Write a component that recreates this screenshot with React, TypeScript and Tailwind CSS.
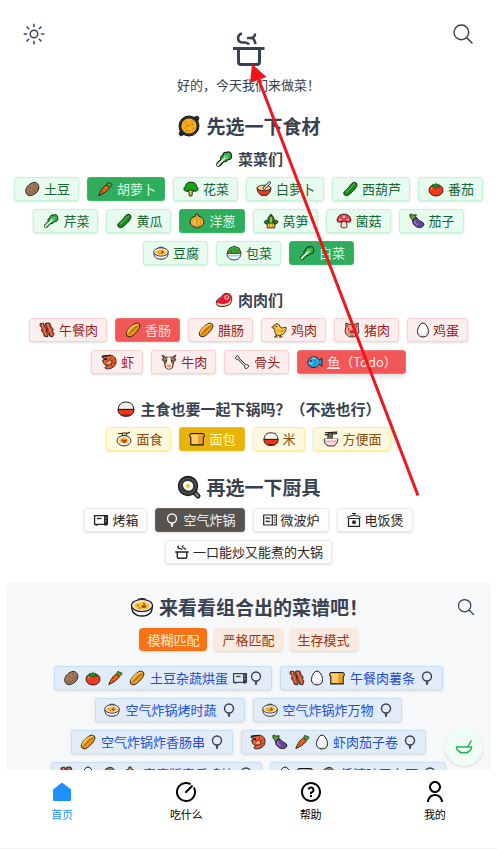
import type { ReactNode } from "react";
import { IoSearchOutline, IoSunnyOutline } from "react-icons/io5";
import { RiQuestionLine, RiUserLine } from "react-icons/ri";

const K = "#161616";

const emojiArt: Record<string, ReactNode> = {
  potato: (
    <>
      <path d="M3 16C2 11 8 3 15 2.5C20 2.500 23 7 21.500 12C20 18 13 22 8 21.500C5 21 3.500 19 3 16Z" fill="#a5795c" stroke={K} strokeWidth="1.3" />
      <path d="M6 18C10 19 17 16 20 10" fill="none" stroke="#8a6147" strokeWidth="1.600" />
      <path d="M9 10h1.500M14 6.500h1.500M13 12h1.500M8 15h1.500M17 9.500h1.500" stroke="#5d3d2a" strokeWidth="1.500" />
    </>
  ),
  carrot: (
    <>
      <path d="M3 21.500C5 16 10 7 14 6.500C17 6.500 19 9 17.500 11.500C14 16 7 20 3 21.500Z" fill="#f7630c" stroke={K} strokeWidth="1.3" />
      <path d="M10 11l2.500 2M7.500 15.500l2 1.300" stroke="#b83d06" strokeWidth="1.300" />
      <path d="M15.500 8C14 5 15 2.500 17 2L18.500 4.500C20 3 22 4 22 6C22 8 19 10 16.500 9Z" fill="#4fa72a" stroke={K} strokeWidth="1" />
    </>
  ),
  broccoli: (
    <>
      <path d="M9 12h6l2 3-3 1-.5 6h-4L9 16l-3-1z" fill="#b5d334" stroke={K} strokeWidth="1.200" />
      <path d="M4 15C1 14 1 9.500 4 8.500C4 4 8 2 12 2C16 2 20 4 20 8.500C23 9.500 23 14 20 15C17 16 14 13 12 13.500C9 13 7 16 4 15Z" fill="#16a316" stroke={K} strokeWidth="1.200" />
    </>
  ),
  spoonBowl: (
    <>
      <path d="M2 10C2 17 6 21.500 12 21.500S22 17 22 10Z" fill="#e83d20" stroke={K} strokeWidth="1.300" />
      <ellipse cx="12" cy="10.500" rx="9.800" ry="4" fill="#fbd394" stroke={K} strokeWidth="1.200" />
      <path d="M12 11L20 3" stroke={K} strokeWidth="4" strokeLinecap="round" />
      <path d="M12 11L20 3" stroke="#eee" strokeWidth="2" strokeLinecap="round" />
      <path d="M8 21h8" stroke="#9a2411" strokeWidth="2" />
    </>
  ),
  cucumber: (
    <>
      <path d="M4 20.500C1.500 18 4 14.500 7 13C11 10 13 4 17 2.500C20 1.500 23 4 22 7C21 11 15 17 10 20.500C8 22 5.500 22 4 20.500Z" fill="#168a1b" stroke={K} strokeWidth="1.300" />
      <path d="M6 17C11 14 15 7 19 4.500" fill="none" stroke="#4cc34a" strokeWidth="1.500" />
    </>
  ),
  tomato: (
    <>
      <path d="M2 14C2 8 6 6 12 6.500C18 6 22 8 22 14C22 19 17 22 12 22S2 19 2 14Z" fill="#ef3a1d" stroke={K} strokeWidth="1.300" />
      <path d="M12 3v3l4-1-1 3 3 2-5-1-1 3-2-3-5 1 3-2-1-3 4 1z" fill="#179b22" stroke="#0d4e12" strokeWidth=".800" />
      <path d="M5 13C5 11 6 10 7 10" fill="none" stroke="#ff9278" strokeWidth="1.500" />
    </>
  ),
  leafy: (
    <>
      <path d="M3 21C1.500 18.500 4 15.500 8 13C7 10 8 8 10.500 7.500C10.500 4 13 2.500 15.500 3.500C18 1.500 22 3.500 21.500 7C23 10 20.500 13.500 17 13C15.500 15.500 12.500 16 11 16C8.500 19.500 5 23 3 21Z" fill="#2fae41" stroke={K} strokeWidth="1.400" />
      <path d="M4 20C6 17 10 14 13 11" fill="none" stroke="#d8f6d3" strokeWidth="2.600" strokeLinecap="round" />
      <path d="M13 11L18 6.500M13 11V7M13 11h4" stroke="#a6e59d" strokeWidth="1.200" />
    </>
  ),
  onion: (
    <>
      <path d="M10.500 2h3l.5 3C20 6.500 22 10 22 13.500C22 18 18 20.500 14 21l-2 1.500L10 21C6 20.500 2 18 2 13.500C2 10 4 6.500 10 5Z" fill="#f6ae2d" stroke={K} strokeWidth="1.300" />
      <path d="M10 6C5 11 6 17 9.500 20M14 6C19 11 18 17 14.500 20M12 6v14" fill="none" stroke="#c07d1a" strokeWidth="1" />
      <path d="M8.500 10C7 13 8 16 9 18" fill="none" stroke="#ffe3a0" strokeWidth="1.300" />
    </>
  ),
  bamboo: (
    <>
      <path d="M2 14C3 10 6 11 7 12L8 7L12 2L16 7L17 12C19 10 22 11 22 14L18 17H6Z" fill="#23851f" stroke={K} strokeWidth="1.200" />
      <path d="M9.500 8L12 4l2.500 4v8h-5z" fill="#91cf37" stroke={K} strokeWidth=".800" />
      <path d="M6.500 15h11v7h-11z" fill="#f8c52d" stroke={K} strokeWidth="1.200" />
      <path d="M10 15v7M14 15v7" stroke="#9c7310" />
    </>
  ),
  mushroom: (
    <>
      <path d="M8.500 12h7l1 8.500C15 22.500 9 22.500 7.500 20.500Z" fill="#fbdcc7" stroke={K} strokeWidth="1.200" />
      <path d="M2 12C2 6 6 2 12 2S22 6 22 12C20 15.500 15 12.500 12 13C9 12.500 4 15.500 2 12Z" fill="#ee3b4b" stroke={K} strokeWidth="1.200" />
      <circle cx="12" cy="6" r="2" fill="#fbb" />
      <circle cx="6.500" cy="10" r="1.600" fill="#fbb" />
      <circle cx="17.500" cy="10" r="1.600" fill="#fbb" />
    </>
  ),
  eggplant: (
    <>
      <path d="M7 8C10 5 13 8 15 11C17 13 22 13 22 17.500C21 22 14 23 10 19.500C6 17 4 12 7 8Z" fill="#68449c" stroke={K} strokeWidth="1.200" />
      <path d="M8.500 11C8.500 14 11 17 13 18" fill="none" stroke="#a889cf" strokeWidth="1.500" />
      <path d="M1.500 3L4 2l2 1.500L11 3L10 6L11 8L8 8.500L6 12L4 8.500C2 8 2 5 1.500 3Z" fill="#659d2b" stroke={K} strokeWidth="1.200" />
    </>
  ),
  stew: (
    <>
      <path d="M2 11C1 17 5 21 12 21S23 17 22 11Z" fill="#f4f4f4" stroke={K} strokeWidth="1.300" />
      <path d="M8 5C8 3 16 3 16 5" fill="#ddd" stroke={K} strokeWidth="1.100" />
      <ellipse cx="12" cy="10.500" rx="10.500" ry="6" fill="#f4f4f4" stroke={K} strokeWidth="1.200" />
      <ellipse cx="12" cy="10.800" rx="8" ry="4" fill="#f9c13c" />
      <path d="M12 11c2-2 4-1 4 1l-4 .5z" fill="#9d541c" stroke="#9d541c" />
      <path d="M7 10.500h2M9 13h1.500M13 8.500h2" stroke="#d8591c" strokeWidth="1.400" />
    </>
  ),
  salad: (
    <>
      <path d="M3 13C1 9 5 8 5 6C6 3 9 5 10 3C12 1 15 3 16 4C20 3 20 8 21 9C23 11 21 13 20 14Z" fill="#37b637" stroke={K} strokeWidth="1.200" />
      <path d="M6 8l3 3M12 5l1 4M17 7l-1 4" stroke="#117522" strokeWidth="1.500" />
      <path d="M8 7h2M14 10h2M6 11h2M17 8h1.500" stroke="#ee3d24" strokeWidth="2" />
      <path d="M2 12.500h20C22 18 19 22 12 22S2 18 2 12.500Z" fill="#eefafa" stroke={K} strokeWidth="1.200" />
      <path d="M3 16h18" stroke="#76c9d0" strokeWidth="1.500" />
    </>
  ),
  steak: (
    <>
      <path d="M2 15C2 11 7 10 9 7C11 3 18 2 21 6C23 9 22 16 19 18C15 21 7 21 4 19.500C2.500 18.500 2 17 2 15Z" fill="#f3c9a8" stroke={K} strokeWidth="1.200" />
      <path d="M3 13C5 10 8 10 10 7C12 3 18 3 20.500 6.500C22 10 20 14 17 15.500C12 18 6 17 4 16C3 15.500 2.500 14 3 13Z" fill="#e5172d" />
      <circle cx="15.500" cy="8.500" r="2.500" fill="#ee2a3c" stroke="#ffd6cf" strokeWidth="1.300" />
    </>
  ),
  bacon: (
    <>
      <path d="M2 3l5-1 2 5 3 3-1 4 3 3-1 5-5-1-1-4-3-4 1-4-3-3zM10 2l6 0 2 5 3 4-1 3 2 3-2 5-4-1-1-5-3-3 0-4-2-3z" fill="#c94a2b" stroke={K} strokeWidth="1.200" />
      <path d="M5 3l1 5 3 4-1 3 3 5M13 3l1 5 3 4 0 3 2 5" fill="none" stroke="#f58e62" strokeWidth="1.300" />
    </>
  ),
  sausage: (
    <>
      <path d="M3.500 20.500C0 17 5 11 8 8C12 4 18 0 21 3.500C24 7 19 13 16 16C12 20 7 24 3.500 20.500Z" fill="#e89b16" stroke={K} strokeWidth="1.400" />
      <path d="M4 17C5 11 14 3 19 4" fill="none" stroke="#ffc954" strokeWidth="2.200" />
      <path d="M6 18C8 14 10 16 11 13C12 10 14 12 15 9C16 7 18 8 19 6" fill="none" stroke="#99590a" strokeWidth="1.500" />
    </>
  ),
  chick: (
    <>
      <path d="M8 18v4M14 18v4M5 22h5M12 22h5" stroke="#7a3f0f" strokeWidth="2" />
      <path d="M1.500 8L5 6C6 2 12 2 13 6C14 10 17 9 22 8C23 12 20 19 13 20C7 20 5 15 6 11Z" fill="#fcc935" stroke={K} strokeWidth="1.200" />
      <path d="M10 12C13 15 17 14 19 12" fill="none" stroke="#ca7d0d" strokeWidth="1.500" />
      <circle cx="8" cy="7" r="1.100" fill={K} />
      <path d="M1.500 8L5 6.500l.5 3z" fill="#ee7419" />
    </>
  ),
  pig: (
    <>
      <path d="M3 2l6 2h6l6-2v6l1 6C21 20 17 22 12 22S3 20 2 14L3 8Z" fill="#f59a8d" stroke={K} strokeWidth="1.200" />
      <path d="M4 4l4 2-3 3zM20 4l-4 2 3 3z" fill="#ba5148" />
      <ellipse cx="12" cy="14.500" rx="4.500" ry="3.300" fill="#e8604f" />
      <path d="M10.500 13.500v2M13.500 13.500v2M7 10v1.500M17 10v1.500" stroke={K} strokeWidth="1.500" />
      <path d="M10 20h4" stroke="#a33b36" strokeWidth="1.200" />
    </>
  ),
  egg: (
    <>
      <path d="M12 2C16 2 20 9 20 14.500C20 19 17 22 12 22S4 19 4 14.500C4 9 8 2 12 2Z" fill="#fafafa" stroke={K} strokeWidth="1.400" />
      <path d="M7 19C11 21 17 19 18 14" fill="none" stroke="#ddd" strokeWidth="1.500" />
    </>
  ),
  shrimp: (
    <>
      <path d="M1.500 5C6 3 15 1 19 4C24 8 23 17 17 20C12 23 6 22 6 20L10 17C5 17 3 13 3 9L7 8Z" fill="#ed6231" stroke={K} strokeWidth="1.300" />
      <path d="M9 12C10 9 15 8 16 11C17 15 13 17 10 16" fill="#f59a70" stroke={K} strokeWidth="1.200" />
      <path d="M15 4l-1 4M20 8l-4 2M21 14l-4-1M17 19l-2-4" stroke="#972b12" strokeWidth="1.300" />
      <circle cx="8" cy="8" r="1.500" fill={K} />
      <path d="M2 3.500L14 2.500" stroke={K} strokeWidth="1.800" />
    </>
  ),
  cow: (
    <>
      <path d="M4 6L2 2l5 3h10l5-3-2 4 2 3-3 2-2 9c-2 3-8 3-10 0L5 11 2 9z" fill="#a9714f" stroke={K} strokeWidth="1.200" />
      <path d="M10 5h4l1 9H9z" fill="#fff" />
      <path d="M7 15C8 12 16 12 17 15L16 20C14 22.500 10 22.500 8 20Z" fill="#ffe7d8" />
      <path d="M9 16h6v3l-3 1-3-1z" fill="#ff8b6d" />
      <path d="M8 9v2M16 9v2" stroke={K} strokeWidth="1.700" />
    </>
  ),
  bone: (
    <path d="M7.500 6.500C8 3 4.500 1.500 4 4.500C1 5 2.500 8.500 6 8L16 18C15.500 22 19 22.500 20 20C23 19 22 15.500 18 16L7.500 6.500Z" fill="#fff" stroke={K} strokeWidth="1.400" />
  ),
  fish: (
    <>
      <path d="M1.500 12.500C2 7 7 4.500 11 4.500C15 4.500 16.500 7 18 9.500L22 6.500V18L18 15C16.500 18 14 20 10 20C5 20 2 17 1.500 12.500Z" fill="#28a9df" stroke={K} strokeWidth="1.300" />
      <path d="M10 8C13 10 13 15 10 18M19 10v4" fill="none" stroke="#0876ad" strokeWidth="1.300" />
      <path d="M3 13c2 0 4 0 5 2M7 7c2-1 4-1 6 0" fill="none" stroke="#a0e7ff" strokeWidth="1.500" />
      <circle cx="6" cy="10.500" r="1.300" fill={K} />
    </>
  ),
  rice: (
    <>
      <path d="M2 13C2 6 6 3 12 3S22 6 22 13Z" fill="#f1f1f1" stroke={K} strokeWidth="1.300" />
      <path d="M1.500 12.500h21C22 18 19 21.500 12 21.500S2 18 1.500 12.500Z" fill="#ec3519" stroke={K} strokeWidth="1.300" />
      <path d="M7 20h10" stroke="#8a1c0b" strokeWidth="1.800" />
    </>
  ),
  pasta: (
    <>
      <path d="M4 4h13l3-2" fill="none" stroke={K} strokeWidth="1.600" />
      <path d="M10 3h6l-1 8H9z" fill="#f6bd3d" stroke={K} strokeWidth="1" />
      <ellipse cx="12" cy="14.500" rx="10" ry="7.500" fill="#f5f5f5" stroke={K} strokeWidth="1.300" />
      <path d="M5 16C5 12 8 9 12 9S19 12 19 16C15 20 9 20 5 16Z" fill="#f9c749" />
      <path d="M8 15c1-4 3-4 4-1 2-3 4-1 4 1l-3 3z" fill="#c9350e" />
    </>
  ),
  bread: (
    <>
      <path d="M4.500 4h15c3.500 0 4 4.500 1.500 6v10.500H3V10C.500 8.500 1 4 4.500 4Z" fill="#e9a21b" stroke={K} strokeWidth="1.500" />
      <path d="M5 5.500h7.500c2.500 0 2.500 3.500 1 4.500v9H4.500v-9C3 9 3 5.500 5 5.500Z" fill="#ffcd6b" />
    </>
  ),
  noodles: (
    <>
      <path d="M3 3l18-1M3 6l18-2" stroke={K} strokeWidth="1.600" />
      <path d="M8 3h6v9H7z" fill="#6f6450" stroke={K} strokeWidth="1" />
      <path d="M2 12h20c0 5-3 8-5 9v1H7v-1c-3-1-5-4-5-9Z" fill="#fbd9dc" stroke={K} strokeWidth="1.300" />
      <path d="M3 12.500h18" stroke="#fff" strokeWidth="2" />
      <path d="M4 16l2-1 2 1 2-1 2 1 2-1 2 1 2-1 2 1" fill="none" stroke="#e57685" />
    </>
  ),
  paella: (
    <>
      <path d="M17 4l3-1.500 1.500 1.500L20.500 7M7 20l-3 1.500L2.500 20 3.500 17" fill="#333" stroke="#222" strokeWidth="1.700" />
      <circle cx="12" cy="12" r="10" fill="#2e2e2e" stroke="#181818" />
      <circle cx="12" cy="12" r="7.600" fill="#f9ae18" />
      <path d="M8 9l2-1M14 7.500h2M12 11h2M7 14h2M15 15l2-1M11 17h2" stroke="#f27a21" strokeWidth="1.600" />
      <path d="M10 11l1 1.500M15 10l1 1M9 17l1-1" stroke="#4a9f28" strokeWidth="1.300" />
    </>
  ),
  pan: (
    <>
      <path d="M16 16l5 5" stroke={K} strokeWidth="5" strokeLinecap="round" />
      <path d="M16 16l5 5" stroke="#7b7b7b" strokeWidth="2.500" strokeLinecap="round" />
      <circle cx="11" cy="11" r="9.500" fill="#4d4d4d" stroke={K} strokeWidth="1.400" />
      <circle cx="11" cy="11" r="7" fill="#333" />
      <path d="M6 10c0-4 5-5 8-3s3 6 0 8-8-1-8-5Z" fill="#fff" />
      <circle cx="11" cy="11" r="2" fill="#f8bd10" />
    </>
  ),
};

const emojiSize = {
  sm: "h-[18px] w-[18px]",
  md: "h-5 w-5",
  lg: "h-[26px] w-[26px]",
};

function Emoji({ name, size = "sm" }: { name: string; size?: keyof typeof emojiSize }) {
  if (name === "egg") {
    return (
      <svg viewBox="2 -1 20 26" className="h-[18px] w-[14px] shrink-0" aria-hidden="true">
        {emojiArt.egg}
      </svg>
    );
  }
  return (
    <svg viewBox="-1 -1 26 26" className={`${emojiSize[size]} shrink-0`} aria-hidden="true">
      {emojiArt[name]}
    </svg>
  );
}

const toolArt: Record<string, ReactNode> = {
  oven: (
    <>
      <path d="M1.600 3.600h12.800v8.800H1.600zM2.500 13.200h2M11.500 13.200h2" strokeWidth="1.300" />
      <path d="M4 6.500h4.500" strokeWidth="1.300" />
      <path d="M11 3.500h3.400v9H11z" fill="currentColor" stroke="none" />
      <path d="M12.300 6h1M12.300 9h1" stroke="#eee" strokeWidth="1" />
    </>
  ),
  fryer: (
    <>
      <circle cx="8" cy="6.500" r="4.500" />
      <path d="M8 11v4" strokeWidth="1.600" />
      <path d="M6.800 12.700h2.400" />
    </>
  ),
  microwave: (
    <>
      <path d="M1.700 3h12.600v10H1.700zM10.300 3v10" strokeWidth="1.200" />
      <path d="M3.500 6.500l1.500-.8 1.500.8 1.500-.8M3.500 9.800L5 9l1.500.8L8 9" strokeWidth="1.200" />
      <path d="M12.300 5v1M12.300 7.500v1M12.300 10v1" strokeWidth="1.200" />
    </>
  ),
  cooker: (
    <>
      <path d="M2.500 6.500h11v7.800h-11zM1.500 5.800C2 4 4 3.500 8 3.500S14 4 14.500 5.800M8 3.500V1M6 1.500h4" strokeWidth="1.200" />
      <circle cx="8" cy="10.300" r="1.300" fill="currentColor" />
    </>
  ),
  pot: (
    <>
      <path d="M1.300 8h13.400M3.300 8v5.300c0 .8.300 1 1 1h7.400c.7 0 1-.2 1-1V8" />
      <path d="M5 2C3 2.500 3.500 4.700 6 4.700c2 0 2 1 2 1M9.500 1.500c-2 1-1 2.500.5 2.700 1.300.2 1.500.8 1.500 1.800" strokeWidth="1.200" />
    </>
  ),
};

function ToolIcon({ name }: { name: string }) {
  return (
    <svg viewBox="0 0 16 16" className="h-4 w-4 shrink-0" fill="none" stroke="currentColor" strokeWidth="1.400" aria-hidden="true">
      {toolArt[name]}
    </svg>
  );
}

type Tone = "green" | "red" | "yellow" | "stone";

const tones: Record<Tone, { on: string; off: string }> = {
  green: {
    on: "border-[#3bb567] bg-[#2fac5c] text-[#dcfce7]",
    off: "border-[#c4f5d6] bg-[#e8fbef] text-[#166534]",
  },
  red: {
    on: "border-[#f47070] bg-[#f15757] text-[#fee2e2]",
    off: "border-[#fdd0d0] bg-[#fdeeee] text-[#991b1b]",
  },
  yellow: {
    on: "border-[#eebd25] bg-[#eab308] text-[#fef9c3]",
    off: "border-[#fdf09a] bg-[#fef9dd] text-[#854d0e]",
  },
  stone: {
    on: "border-[#67625e] bg-[#57534e] text-[#f5f5f4]",
    off: "border-[#ebebeb] bg-[#fdfdfd] text-[#292524]",
  },
};

type Item = { name: string; icon: string; on?: boolean; link?: boolean };

const vegetables: Item[] = [
  { name: "土豆", icon: "potato" },
  { name: "胡萝卜", icon: "carrot", on: true },
  { name: "花菜", icon: "broccoli" },
  { name: "白萝卜", icon: "spoonBowl" },
  { name: "西葫芦", icon: "cucumber" },
  { name: "番茄", icon: "tomato" },
  { name: "芹菜", icon: "leafy" },
  { name: "黄瓜", icon: "cucumber" },
  { name: "洋葱", icon: "onion", on: true },
  { name: "莴笋", icon: "bamboo" },
  { name: "菌菇", icon: "mushroom" },
  { name: "茄子", icon: "eggplant" },
  { name: "豆腐", icon: "stew" },
  { name: "包菜", icon: "salad" },
  { name: "白菜", icon: "leafy", on: true },
];

const meats: Item[] = [
  { name: "午餐肉", icon: "bacon" },
  { name: "香肠", icon: "sausage", on: true },
  { name: "腊肠", icon: "sausage" },
  { name: "鸡肉", icon: "chick" },
  { name: "猪肉", icon: "pig" },
  { name: "鸡蛋", icon: "egg" },
  { name: "虾", icon: "shrimp" },
  { name: "牛肉", icon: "cow" },
  { name: "骨头", icon: "bone" },
  { name: "鱼（Todo）", icon: "fish", on: true, link: true },
];

const staples: Item[] = [
  { name: "面食", icon: "pasta" },
  { name: "面包", icon: "bread", on: true },
  { name: "米", icon: "rice" },
  { name: "方便面", icon: "noodles" },
];

const tools: Item[] = [
  { name: "烤箱", icon: "oven" },
  { name: "空气炸锅", icon: "fryer", on: true },
  { name: "微波炉", icon: "microwave" },
  { name: "电饭煲", icon: "cooker" },
  { name: "一口能炒又能煮的大锅", icon: "pot" },
];

const recipes = [
  { name: "土豆杂蔬烘蛋", stuff: ["potato", "tomato", "carrot", "sausage"], tools: ["oven", "fryer"] },
  { name: "午餐肉薯条", stuff: ["bacon", "egg", "bread"], tools: ["fryer"] },
  { name: "空气炸锅烤时蔬", stuff: ["stew"], tools: ["fryer"] },
  { name: "空气炸锅炸万物", stuff: ["stew"], tools: ["fryer"] },
  { name: "空气炸锅炸香肠串", stuff: ["sausage"], tools: ["fryer"] },
  { name: "虾肉茄子卷", stuff: ["shrimp", "eggplant", "carrot", "egg"], tools: ["fryer"] },
  { name: "家庭版麦乐鸡块", stuff: ["bacon", "egg", "potato", "onion"], tools: ["fryer"] },
  { name: "低糖吐司布丁", stuff: ["egg", "bread", "potato"], tools: ["fryer"] },
];

const chipBase =
  "inline-flex h-6 items-center rounded-[3px] border text-[13px] leading-5 whitespace-nowrap";

function Chips({ items, tone }: { items: Item[]; tone: Tone }) {
  return (
    <div className="flex flex-wrap justify-center gap-2">
      {items.map((item) => {
        const look = item.on ? tones[tone].on : tones[tone].off;
        const icon = tone === "stone" ? <ToolIcon name={item.icon} /> : <Emoji name={item.icon} />;
        if (item.link) {
          return (
            <a key={item.name} href="#todo" className={`${chipBase} gap-[3px] px-2 shadow-md ${look}`}>
              {icon}
              <span>
                <span className="underline">{item.name.slice(0, 1)}</span>
                {item.name.slice(1)}
              </span>
            </a>
          );
        }
        return (
          <button
            key={item.name}
            type="button"
            aria-pressed={!!item.on}
            className={`${chipBase} gap-[3px] px-2 shadow-sm ${look}`}
          >
            {icon}
            <span>{item.name}</span>
          </button>
        );
      })}
    </div>
  );
}

function Title({ icon, children }: { icon: string; children: ReactNode }) {
  return (
    <h2 className="flex items-center justify-center gap-1 text-[19px] leading-7 font-bold whitespace-nowrap">
      <Emoji name={icon} size="lg" />
      {children}
    </h2>
  );
}

function SubTitle({ icon, children }: { icon: string; children: ReactNode }) {
  return (
    <h3 className="mb-2 flex items-center justify-center gap-1 text-[15px] leading-5 font-bold whitespace-nowrap">
      <Emoji name={icon} size="md" />
      {children}
    </h3>
  );
}

function ModeButton({ active, children }: { active?: boolean; children: ReactNode }) {
  return (
    <button
      type="button"
      aria-pressed={!!active}
      className={`h-[23px] rounded px-2 text-[13px] leading-5 shadow-sm ${
        active ? "bg-[#f97316] text-[#ffedd5]" : "bg-[#f9eadf] text-[#9a3412]"
      }`}
    >
      {children}
    </button>
  );
}

const tabs = [
  {
    name: "首页",
    active: true,
    icon: (
      <svg viewBox="0 0 24 24" className="h-6 w-6" fill="currentColor" aria-hidden="true">
        <path d="M11 3.200a1.600 1.600 0 0 1 2 0l7.400 5.800c.4.300.6.700.6 1.200V20a1 1 0 0 1-1 1H4a1 1 0 0 1-1-1v-9.800c0-.5.2-.9.6-1.200z" />
      </svg>
    ),
  },
  {
    name: "吃什么",
    icon: (
      <svg viewBox="0 0 24 24" className="h-6 w-6" fill="none" stroke="currentColor" strokeWidth="2" aria-hidden="true">
        <path d="M16.500 4.200A9 9 0 1 0 19.800 7.500M11.300 12.700L18.500 5.500" />
      </svg>
    ),
  },
  { name: "帮助", icon: <RiQuestionLine className="h-6 w-6" /> },
  { name: "我的", icon: <RiUserLine className="h-6 w-6" /> },
];

export default function App() {
  return (
    <div
      className="relative flex h-screen flex-col bg-white text-[#374151]"
      style={{ fontFamily: '"Noto Sans CJK SC", "Noto Sans", sans-serif' }}
    >
      <main className="min-h-0 flex-1 overflow-y-auto px-2 [scrollbar-width:none]">
        <header className="flex items-start justify-between px-[14px] pt-[22px]">
          <button type="button" aria-label="切换主题">
            <IoSunnyOutline className="h-6 w-6" />
          </button>
          <svg viewBox="0 0 36 36" className="mt-[9px] h-9 w-9" fill="none" stroke="currentColor" strokeWidth="3" aria-hidden="true">
            <path d="M2 17.500h31.500M7.500 17.500v13.500c0 1.500 1 2.500 2.500 2.500h16c1.500 0 2.500-1 2.500-2.500v-13.500" />
            <path d="M11 2.500C6 3.500 5.500 11 11.500 11.500h2.500c2.500 0 3 .5 4 2M16 7h4c3 0 4 3 4.500 6M24 2.500c0 2.500-1.500 4.500-4 4.500" strokeWidth="2.600" />
          </svg>
          <button type="button" aria-label="搜索">
            <IoSearchOutline className="h-6 w-6" />
          </button>
        </header>
        <p className="mt-2 text-center text-[13px] leading-5">好的，今天我们来做菜！</p>

        <section className="mt-[17px]">
          <Title icon="paella">先选一下食材</Title>
          <div className="mt-[9px]">
            <SubTitle icon="leafy">菜菜们</SubTitle>
            <Chips items={vegetables} tone="green" />
          </div>
          <div className="mt-[25px]">
            <SubTitle icon="steak">肉肉们</SubTitle>
            <Chips items={meats} tone="red" />
          </div>
          <div className="mt-[25px]">
            <SubTitle icon="rice">主食也要一起下锅吗？（不选也行）</SubTitle>
            <Chips items={staples} tone="yellow" />
          </div>
        </section>

        <section className="mt-[22px]">
          <Title icon="pan">再选一下厨具</Title>
          <div className="mt-[7px]">
            <Chips items={tools} tone="stone" />
          </div>
        </section>

        <section className="mt-[18px] rounded bg-[#f7f8fa] px-[13px] pt-[11px] pb-6 shadow-sm">
          <div className="grid grid-cols-[1fr_auto_1fr] items-center">
            <span />
            <Title icon="stew">来看看组合出的菜谱吧！</Title>
            <button type="button" aria-label="搜索菜谱" className="justify-self-end">
              <IoSearchOutline className="h-5 w-5" />
            </button>
          </div>
          <div className="mt-[7px] flex justify-center gap-[7px]">
            <ModeButton active>模糊匹配</ModeButton>
            <ModeButton>严格匹配</ModeButton>
            <ModeButton>生存模式</ModeButton>
          </div>
          <div className="mt-[15px] flex flex-wrap justify-center gap-2">
            {recipes.map((recipe) => (
              <a
                key={recipe.name}
                href={`#${recipe.name}`}
                className={`${chipBase} gap-1 border-[#c7def9] bg-[#e2ecf9] px-[7px] text-[#1d4ed8] shadow-sm [border-bottom-style:dashed]`}
              >
                {recipe.stuff.map((icon) => (
                  <Emoji key={icon} name={icon} />
                ))}
                <span>{recipe.name}</span>
                <span className="flex text-[#374151]">
                  {recipe.tools.map((icon) => (
                    <ToolIcon key={icon} name={icon} />
                  ))}
                </span>
              </a>
            ))}
          </div>
        </section>
      </main>

      <nav className="grid h-[79px] shrink-0 grid-cols-4 border-b border-gray-100 bg-white text-black">
        {tabs.map((tab) => (
          <a
            key={tab.name}
            href={`#${tab.name}`}
            className={`flex flex-col items-center gap-[3px] pt-[10px] text-[11px] leading-[14px] ${tab.active ? "text-[#1e90ff]" : ""}`}
          >
            {tab.icon}
            {tab.name}
          </a>
        ))}
      </nav>

      <button
        type="button"
        aria-label="随机菜谱"
        className="absolute right-[14px] bottom-[83px] flex h-[38px] w-[38px] items-center justify-center rounded-full bg-[#f0fdf4] text-[#27b35a] shadow-sm"
      >
        <svg viewBox="0 0 18 18" className="h-[18px] w-[18px]" fill="none" stroke="currentColor" strokeWidth="1.500" strokeLinecap="round" strokeLinejoin="round" aria-hidden="true">
          <path d="M1.500 9h15c0 2.500-1.500 4-3.500 4.500v1.300H5v-1.300C3 13 1.500 11.500 1.500 9ZM13 8.500L16 3" />
        </svg>
      </button>

      <svg viewBox="0 0 497 849" className="pointer-events-none absolute top-0 left-1/2 h-[849px] w-[497px] -translate-x-1/2" aria-hidden="true">
        <path d="M417.500 495.500L258 79" stroke="#ee151d" strokeWidth="3" />
        <path d="M251.500 64L266 77L249.500 83Z" fill="#ee151d" />
      </svg>
    </div>
  );
}
